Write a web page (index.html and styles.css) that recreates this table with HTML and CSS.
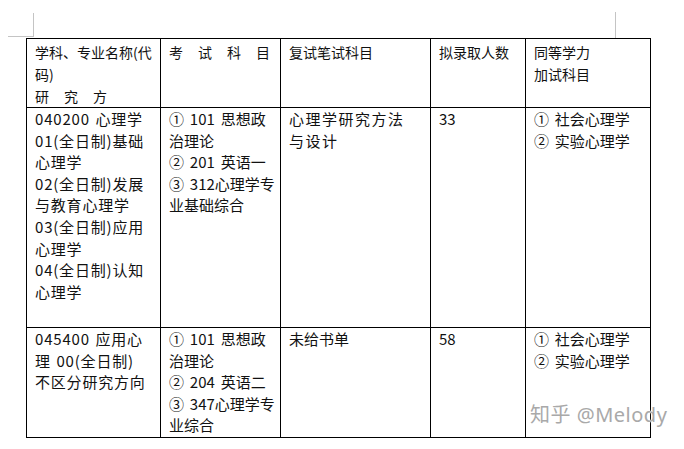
FILE: index.html
```html
<!DOCTYPE html>
<html lang="zh-CN">
<head>
<meta charset="utf-8">
<title>心理学招生目录</title>
<link rel="stylesheet" href="styles.css">
</head>
<body>
<div class="page">
  <div class="marks">
    <span class="mark-l"></span>
    <span class="mark-r"></span>
  </div>
  <table class="grid">
    <colgroup>
      <col class="c1"><col class="c2"><col class="c3"><col class="c4"><col class="c5">
    </colgroup>
    <tr class="r-head">
      <td class="hd">学科、专业名称(代<br>码)<br><span class="spread">研究</span>方</td>
      <td class="hd"><span class="spread">考试科</span>目</td>
      <td class="hd">复试笔试科目</td>
      <td class="hd">拟录取人数</td>
      <td class="hd">同等学力<br>加试科目</td>
    </tr>
    <tr class="r-one">
      <td class="name">040200 心理学<br>01(全日制)基础<br>心理学<br>02(全日制)发展<br>与教育心理学<br>03(全日制)应用<br>心理学<br>04(全日制)认知<br>心理学</td>
      <td>① 101 思想政<br>治理论<br>② 201 英语一<br>③ 312心理学专<br>业基础综合</td>
      <td class="wide">心理学研究方法<br>与设计</td>
      <td>33</td>
      <td>① 社会心理学<br>② 实验心理学</td>
    </tr>
    <tr class="r-two">
      <td class="name">045400 应用心<br>理 00(全日制)<br>不区分研究方向</td>
      <td>① 101 思想政<br>治理论<br>② 204 英语二<br>③ 347心理学专<br>业综合</td>
      <td>未给书单</td>
      <td>58</td>
      <td>① 社会心理学<br>② 实验心理学</td>
    </tr>
  </table>
  <div class="watermark">知乎 @Melody</div>
</div>
</body>
</html>
```

FILE: styles.css
```css
html, body {
  margin: 0;
  padding: 0;
  background: #ffffff;
}

.page {
  position: relative;
  width: 684px;
  height: 449px;
  font-family: "Noto Sans CJK SC", "Noto Sans", sans-serif;
  color: #111;
}

.marks {
  display: flex;
  align-items: flex-start;
  height: 38px;
}

.mark-l {
  display: block;
  margin-left: 8px;
  margin-top: 13px;
  width: 25px;
  height: 23px;
  border-right: 1px solid #c4c4c4;
  border-bottom: 1px solid #c4c4c4;
}

.mark-r {
  display: block;
  margin-left: 581px;
  margin-top: 12px;
  width: 1px;
  height: 26px;
  background: #c4c4c4;
}

.grid {
  margin-left: 26px;
  border-collapse: collapse;
  table-layout: fixed;
  width: 624px;
  font-size: 15px;
  line-height: 21.6px;
}

.c1 { width: 134px; }
.c2 { width: 120px; }
.c3 { width: 150px; }
.c4 { width: 95px; }
.c5 { width: 125px; }

.grid td {
  border: 1px solid #000;
  vertical-align: top;
  padding: 0 2px 0 8px;
  white-space: nowrap;
  overflow: hidden;
  word-spacing: 2.5px;
}

.r-head { height: 69px; }
.r-one { height: 220px; }
.r-two { height: 110px; }

.grid td.hd {
  font-size: 14px;
  line-height: 22px;
  padding-top: 2px;
  word-spacing: 0;
}

.spread {
  letter-spacing: 15px;
}

.name {
  letter-spacing: 0.8px;
}

.grid td.name {
  word-spacing: 1.5px;
}

.wide {
  letter-spacing: 1.5px;
}

.watermark {
  position: absolute;
  left: 530px;
  top: 402px;
  font-family: "Noto Sans", "Noto Sans CJK SC", sans-serif;
  font-size: 20px;
  line-height: 26px;
  letter-spacing: 0.5px;
  color: #a9a9a9;
  text-shadow: 0 0 2px #ffffff, 0 0 1px #ffffff;
  white-space: nowrap;
}
```
